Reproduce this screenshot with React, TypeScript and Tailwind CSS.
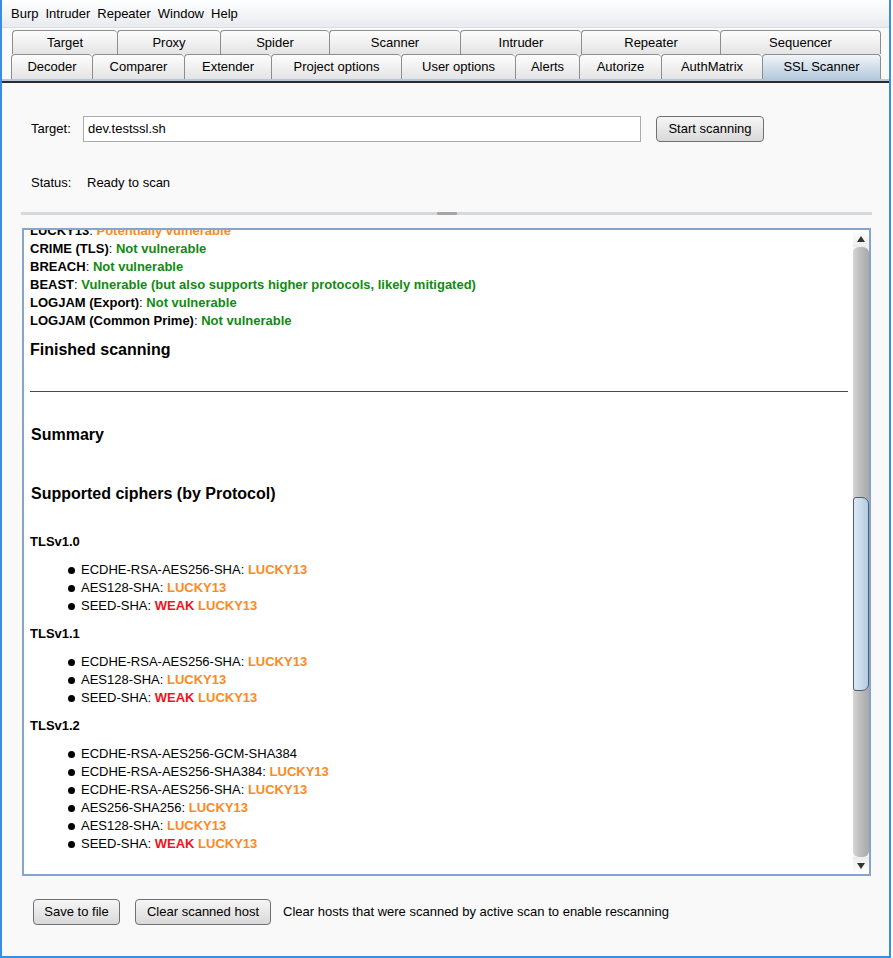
import React from "react";

const row1 = [
  { label: "Target", w: 105 },
  { label: "Proxy", w: 103 },
  { label: "Spider", w: 109 },
  { label: "Scanner", w: 131 },
  { label: "Intruder", w: 121 },
  { label: "Repeater", w: 139 },
  { label: "Sequencer", w: 161 },
];

const row2 = [
  { label: "Decoder", w: 81 },
  { label: "Comparer", w: 92 },
  { label: "Extender", w: 87 },
  { label: "Project options", w: 130 },
  { label: "User options", w: 114 },
  { label: "Alerts", w: 64 },
  { label: "Autorize", w: 82 },
  { label: "AuthMatrix", w: 101 },
  { label: "SSL Scanner", w: 119, active: true },
];

const vulns = [
  { name: "LUCKY13", result: "Potentially vulnerable", tone: "orange" },
  { name: "CRIME (TLS)", result: "Not vulnerable", tone: "green" },
  { name: "BREACH", result: "Not vulnerable", tone: "green" },
  {
    name: "BEAST",
    result: "Vulnerable (but also supports higher protocols, likely mitigated)",
    tone: "green",
  },
  { name: "LOGJAM (Export)", result: "Not vulnerable", tone: "green" },
  { name: "LOGJAM (Common Prime)", result: "Not vulnerable", tone: "green" },
];

type Cipher = { name: string; weak?: boolean; lucky?: boolean };

const protocols: { name: string; ciphers: Cipher[] }[] = [
  {
    name: "TLSv1.0",
    ciphers: [
      { name: "ECDHE-RSA-AES256-SHA", lucky: true },
      { name: "AES128-SHA", lucky: true },
      { name: "SEED-SHA", weak: true, lucky: true },
    ],
  },
  {
    name: "TLSv1.1",
    ciphers: [
      { name: "ECDHE-RSA-AES256-SHA", lucky: true },
      { name: "AES128-SHA", lucky: true },
      { name: "SEED-SHA", weak: true, lucky: true },
    ],
  },
  {
    name: "TLSv1.2",
    ciphers: [
      { name: "ECDHE-RSA-AES256-GCM-SHA384" },
      { name: "ECDHE-RSA-AES256-SHA384", lucky: true },
      { name: "ECDHE-RSA-AES256-SHA", lucky: true },
      { name: "AES256-SHA256", lucky: true },
      { name: "AES128-SHA", lucky: true },
      { name: "SEED-SHA", weak: true, lucky: true },
    ],
  },
];

function Tab({ label, w, active }: { label: string; w: number; active?: boolean }) {
  return (
    <div
      style={{ width: w }}
      className={
        "flex items-center justify-center border-t border-l border-[#8c8d8e] rounded-t-[4px] text-[13px] text-black last:border-r " +
        (active
          ? "bg-linear-to-b from-[#f2f5f9] to-[#b5c9dd]"
          : "bg-linear-to-b from-[#fdfdfd] to-[#e4e4e4]")
      }
    >
      {label}
    </div>
  );
}

function Button({ children, w }: { children: React.ReactNode; w: number }) {
  return (
    <button
      style={{ width: w }}
      className="h-[26px] rounded-[4px] border border-[#707070] bg-linear-to-b from-[#f6f6f6] to-[#d9d9d9] text-[13px] text-black"
    >
      {children}
    </button>
  );
}

export default function App() {
  return (
    <div className="w-[893px] h-[958px] bg-white [font-family:'Liberation_Sans',Arial,sans-serif] text-black">
      <div className="w-[891px] h-[958px] flex flex-col border-l-2 border-r-2 border-b-2 border-[#3a8ee2] bg-[#f9f9f9]">
        {/* menu bar */}
        <div className="h-[28px] flex items-center gap-[7px] pl-[9px] pt-px text-[13px] bg-linear-to-b from-white to-[#e8ebef] border-b border-[#dadde2]">
          <span>Burp</span>
          <span>Intruder</span>
          <span>Repeater</span>
          <span>Window</span>
          <span>Help</span>
        </div>

        {/* tabs */}
        <div className="pt-[2px] bg-[#fafafa]">
          <div className="flex h-[24px] pl-[10px]">
            {row1.map((t) => (
              <Tab key={t.label} {...t} />
            ))}
          </div>
          <div className="flex h-[25px] pl-[9px]">
            {row2.map((t) => (
              <Tab key={t.label} {...t} />
            ))}
          </div>
          <div className="h-[2px] bg-[#b4c8dc]" />
          <div className="h-[2px] bg-[#2c2c2c]" />
        </div>

        {/* body */}
        <div className="flex-1 flex flex-col">
          <div className="mt-[33px] flex items-center h-[26px] pl-[29px] text-[13px]">
            <span className="w-[52px]">Target:</span>
            <div className="w-[558px] h-[26px] border border-[#ababab] bg-white flex items-center pl-[4px]">
              dev.testssl.sh
            </div>
            <div className="ml-[15px]">
              <Button w={108}>Start scanning</Button>
            </div>
          </div>

          <div className="mt-[33px] flex items-center h-[16px] pl-[29px] text-[13px]">
            <span className="w-[56px]">Status:</span>
            <span>Ready to scan</span>
          </div>

          {/* splitter */}
          <div className="mt-[21px] ml-[19px] w-[851px] h-[3px] bg-[#d6d8de] flex justify-center">
            <div className="w-[20px] h-[3px] bg-[#a2a6ab] rounded-[1px]" />
          </div>

          {/* output pane */}
          <div className="mt-[13px] ml-[20px] w-[849px] h-[648px] border-2 border-[#86a4cc] bg-white flex">
            <div className="flex-1 overflow-hidden pl-[6px] text-[13px] flex flex-col">
              <div className="-mt-[8px] leading-[18px]">
                {vulns.map((v) => (
                  <div key={v.name} className="h-[18px] whitespace-nowrap">
                    <b>{v.name}</b>:{" "}
                    <b className={v.tone === "green" ? "text-[#118a11]" : "text-[#fb8a22]"}>
                      {v.result}
                    </b>
                  </div>
                ))}
              </div>
              <div className="mt-[10px] h-[20px] leading-[20px] text-[16px] font-bold">
                Finished scanning
              </div>
              <div className="mt-[31px] mr-[5px] h-px bg-[#4a4a4a]" />
              <div className="mt-[33px] h-[20px] leading-[20px] text-[16px] font-bold pl-px">
                Summary
              </div>
              <div className="mt-[39px] h-[20px] leading-[20px] text-[16px] font-bold pl-px">
                Supported ciphers (by Protocol)
              </div>
              <div className="mt-[29px] flex flex-col gap-[10px]">
                {protocols.map((p) => (
                  <div key={p.name} className="flex flex-col">
                    <div className="h-[18px] leading-[18px] font-bold">{p.name}</div>
                    <ul className="mt-[10px]">
                      {p.ciphers.map((c, i) => (
                        <li key={i} className="h-[18px] leading-[18px] flex items-center whitespace-nowrap">
                          <span className="ml-[38px] mr-[6px] w-[7px] h-[7px] rounded-full bg-black" />
                          <span>
                            {c.name}
                            {c.lucky && ": "}
                            {c.weak && <b className="text-[#f2121e]">WEAK </b>}
                            {c.lucky && <b className="text-[#fb8a22]">LUCKY13</b>}
                          </span>
                        </li>
                      ))}
                    </ul>
                  </div>
                ))}
              </div>
            </div>

            {/* scrollbar */}
            <div className="w-[16px] flex flex-col bg-[#f4f4f4]">
              <div className="h-[17px] flex items-center justify-center bg-linear-to-b from-white to-[#ececec]">
                <svg width="8" height="6" viewBox="0 0 8 6">
                  <path d="M4 0 L8 6 L0 6 Z" fill="#333" />
                </svg>
              </div>
              <div className="flex-1 flex flex-col rounded-[6px] bg-linear-to-r from-[#d4d4d4] via-[#bcbcbc] to-[#a8a8a8]">
                <div className="h-[250px]" />
                <div className="h-[194px] rounded-r-[7px] rounded-l-[3px] border border-[#4e5e70] bg-linear-to-r from-[#dde9f4] to-[#b5cce3]" />
                <div className="flex-1" />
              </div>
              <div className="h-[17px] flex items-center justify-center bg-linear-to-b from-[#ececec] to-white">
                <svg width="8" height="6" viewBox="0 0 8 6">
                  <path d="M0 0 L8 0 L4 6 Z" fill="#333" />
                </svg>
              </div>
            </div>
          </div>

          {/* bottom buttons */}
          <div className="mt-[23px] flex items-center pl-[31px] gap-[15px] text-[13px]">
            <Button w={87}>Save to file</Button>
            <Button w={136}>Clear scanned host</Button>
            <span className="-ml-[3px]">Clear hosts that were scanned by active scan to enable rescanning</span>
          </div>
        </div>
      </div>
    </div>
  );
}
